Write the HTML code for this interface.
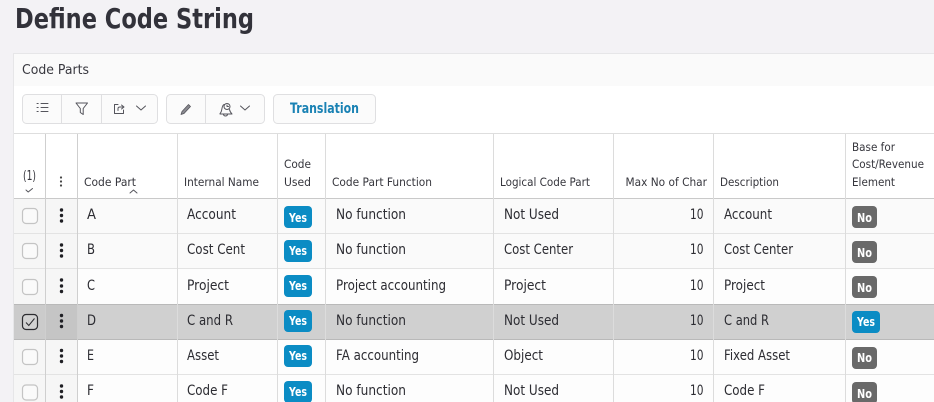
<!DOCTYPE html>
<html><head><meta charset="utf-8"><style>
html,body{margin:0;padding:0;background:#f3f2f5;width:934px;height:402px;overflow:hidden}
svg{display:block;position:absolute;left:0;top:0}
text{font-family:"DejaVu Sans","Liberation Sans",sans-serif}
.c{font-size:14px;fill:#2c2c32}
.h{font-size:11.5px;fill:#36363d}
.b{font-size:12px;font-weight:700;fill:#fff}
.i{fill:none;stroke:#55555c;stroke-width:1;stroke-linecap:round;stroke-linejoin:round}
.l{stroke:#e3e3e3;stroke-width:1}
.v{stroke:#dcdcdc;stroke-width:1}
</style></head><body>
<svg width="934" height="402" viewBox="0 0 934 402">
<rect width="934" height="402" fill="#f3f2f5"/>
<text x="15" y="28" font-size="28" font-weight="700" fill="#32323a" textLength="239" lengthAdjust="spacingAndGlyphs">Define Code String</text>

<rect x="13.5" y="53.5" width="921" height="349" fill="#fff" stroke="#e6e6e8"/>
<rect x="14" y="54" width="920" height="32" fill="#fafafa"/>
<text x="22" y="74" font-size="13.5" fill="#38383f" textLength="67" lengthAdjust="spacingAndGlyphs">Code Parts</text>

<!-- toolbar -->
<rect x="22.5" y="94.5" width="135" height="29" rx="4" fill="#fbfbfb" stroke="#dfdfe1"/>
<path d="M61.5 95V123M101.5 95V123" stroke="#dfdfe1"/>
<rect x="166.5" y="94.5" width="98" height="29" rx="4" fill="#fbfbfb" stroke="#dfdfe1"/>
<path d="M205.5 95V123" stroke="#dfdfe1"/>
<rect x="273.5" y="94.5" width="102" height="29" rx="4" fill="#fbfbfb" stroke="#dfdfe1"/>
<text x="290" y="113" font-size="14" font-weight="700" fill="#1a82b4" textLength="69" lengthAdjust="spacingAndGlyphs">Translation</text>
<!-- list icon -->
<path d="M41 103.5H48M41 107.5H48M41 111.5H48" class="i"/>
<path d="M37 103.5h1.200M37 107.5h1.200M37 111.500h1.200" class="i" stroke-width="1.600"/>
<!-- filter icon -->
<path d="M76 103H87.500L83.200 108.500V114.500L80.300 112.500V108.500Z" class="i"/>
<!-- export icon -->
<path d="M118 104.500H114.500V113.500H123.500V110" class="i"/>
<path d="M118 110.500V108.500Q118 107 120 107H123.500M121.500 105L124 107L121.500 109" class="i"/>
<path d="M136.500 106L141 110L145.500 106" class="i"/>
<!-- pencil -->
<path d="M182 111.500L181 114.500L184 113.500L190.500 106.500L188.500 104.500Z" fill="#8a8a90" stroke="#55555c" stroke-width=".8" stroke-linejoin="round"/>
<!-- bell -->
<path d="M220 113.500C222 112 221.500 109 222.500 106.500C223 105 224 104.500 224.500 104.500M229.500 109.500C229.800 111 230.700 112.800 232 114H220M223.500 114.500C224 116.500 227 116.500 227.500 114.500" class="i"/>
<circle cx="227" cy="106.500" r="3" class="i"/>
<path d="M227 105V106.500H228.500" class="i"/>
<path d="M240.500 106L245 110L249.500 106" class="i"/>

<!-- table bg -->
<rect x="14" y="134" width="920" height="64" fill="#fff"/>
<rect x="14" y="199" width="920" height="70" fill="#fafafa"/>
<rect x="14" y="269" width="920" height="35" fill="#fdfdfd"/>
<rect x="14" y="340" width="920" height="62" fill="#fdfdfd"/>
<rect x="14" y="199" width="64" height="203" fill="#f6f6f6"/>
<rect x="14" y="304" width="920" height="36" fill="#d0d0d0"/>
<rect x="14" y="304" width="32" height="36" fill="#cbcbcb"/>
<rect x="46" y="304" width="32" height="36" fill="#c5c5c5"/>

<!-- lines -->
<path d="M14 133.500H934" stroke="#dedede"/>
<path d="M14 198.500H934" stroke="#c9c9c9"/>
<path d="M14 233.500H934M14 268.500H934M14 374.500H934" class="l"/>
<path d="M14 304.500H934M14 339.500H934" stroke="#b9b9b9"/>
<path d="M45.500 134V402M77.500 134V402" stroke="#cfcfcf"/>
<path d="M177.500 134V402M277.500 134V402M325.500 134V402M493.500 134V402M613.500 134V402M713.500 134V402M845.500 134V402" class="v"/>

<!-- header -->
<text x="23" y="180" class="h" style="font-size:13px" textLength="13" lengthAdjust="spacingAndGlyphs">(1)</text>
<path d="M26 190L28.200 192L32.500 188.500" class="i"/>
<circle cx="61" cy="177.500" r="1.100" fill="#444"/><circle cx="61" cy="181.500" r="1.100" fill="#444"/><circle cx="61" cy="185.500" r="1.100" fill="#444"/>
<text x="84" y="186" class="h" textLength="52" lengthAdjust="spacingAndGlyphs">Code Part</text>
<path d="M130 193L133.500 190L137 193" class="i"/>
<text x="184" y="186" class="h" textLength="75" lengthAdjust="spacingAndGlyphs">Internal Name</text>
<text x="284" y="168" class="h" textLength="27" lengthAdjust="spacingAndGlyphs">Code</text>
<text x="284" y="186" class="h" textLength="27" lengthAdjust="spacingAndGlyphs">Used</text>
<text x="332" y="186" class="h" textLength="100" lengthAdjust="spacingAndGlyphs">Code Part Function</text>
<text x="500" y="186" class="h" textLength="90" lengthAdjust="spacingAndGlyphs">Logical Code Part</text>
<text x="625.500" y="186" class="h" textLength="81.500" lengthAdjust="spacingAndGlyphs">Max No of Char</text>
<text x="720" y="186" class="h" textLength="59" lengthAdjust="spacingAndGlyphs">Description</text>
<text x="852" y="151" class="h" textLength="43" lengthAdjust="spacingAndGlyphs">Base for</text>
<text x="852" y="168" class="h" textLength="72" lengthAdjust="spacingAndGlyphs">Cost/Revenue</text>
<text x="852" y="186" class="h" textLength="43" lengthAdjust="spacingAndGlyphs">Element</text>

<!-- checkboxes -->
<g fill="#fafafa" stroke="#c4c4c4" stroke-width="1.200">
<rect x="22.500" y="208.500" width="15" height="15" rx="3.500"/>
<rect x="22.500" y="243.500" width="15" height="15" rx="3.500"/>
<rect x="22.500" y="279.500" width="15" height="15" rx="3.500"/>
<rect x="22.500" y="349.500" width="15" height="15" rx="3.500"/>
<rect x="22.500" y="385" width="15" height="15" rx="3.500"/>
</g>
<rect x="22.500" y="314.500" width="15" height="15" rx="3.500" fill="#d2d2d2" stroke="#2c2c30" stroke-width="1.200"/>
<path d="M26 322.500L28.800 325.500L34.500 318.500" fill="none" stroke="#2c2c30" stroke-width="1"/>

<!-- row kebabs -->
<g fill="#1f1f24">
<circle cx="61.500" cy="210" r="1.700"/><circle cx="61.500" cy="215.500" r="1.700"/><circle cx="61.500" cy="221" r="1.700"/>
<circle cx="61.500" cy="245" r="1.700"/><circle cx="61.500" cy="250.500" r="1.700"/><circle cx="61.500" cy="256" r="1.700"/>
<circle cx="61.500" cy="280" r="1.700"/><circle cx="61.500" cy="286" r="1.700"/><circle cx="61.500" cy="291.500" r="1.700"/>
<circle cx="61.500" cy="315.500" r="1.700"/><circle cx="61.500" cy="321" r="1.700"/><circle cx="61.500" cy="326.500" r="1.700"/>
<circle cx="61.500" cy="350.500" r="1.700"/><circle cx="61.500" cy="356" r="1.700"/><circle cx="61.500" cy="361.500" r="1.700"/>
<circle cx="61.500" cy="386" r="1.700"/><circle cx="61.500" cy="391.500" r="1.700"/><circle cx="61.500" cy="397" r="1.700"/>
</g>

<!-- col: code part -->
<text x="87" y="219" class="c" textLength="9" lengthAdjust="spacingAndGlyphs">A</text>
<text x="87" y="254" class="c" textLength="8" lengthAdjust="spacingAndGlyphs">B</text>
<text x="87" y="290" class="c" textLength="8" lengthAdjust="spacingAndGlyphs">C</text>
<text x="87" y="325" class="c" textLength="9" lengthAdjust="spacingAndGlyphs">D</text>
<text x="87" y="360" class="c" textLength="7" lengthAdjust="spacingAndGlyphs">E</text>
<text x="87" y="395" class="c" textLength="7" lengthAdjust="spacingAndGlyphs">F</text>
<!-- col: internal name -->
<text x="187" y="219" class="c" textLength="49" lengthAdjust="spacingAndGlyphs">Account</text>
<text x="187" y="254" class="c" textLength="58" lengthAdjust="spacingAndGlyphs">Cost Cent</text>
<text x="187" y="290" class="c" textLength="42" lengthAdjust="spacingAndGlyphs">Project</text>
<text x="187" y="325" class="c" textLength="46" lengthAdjust="spacingAndGlyphs">C and R</text>
<text x="187" y="360" class="c" textLength="32" lengthAdjust="spacingAndGlyphs">Asset</text>
<text x="187" y="395" class="c" textLength="41" lengthAdjust="spacingAndGlyphs">Code F</text>

<!-- badges yes -->
<g fill="#0b8cc4">
<rect x="284" y="206" width="28" height="22" rx="4"/>
<rect x="284" y="240" width="28" height="22" rx="4"/>
<rect x="284" y="275" width="28" height="22" rx="4"/>
<rect x="284" y="310" width="28" height="22" rx="4"/>
<rect x="284" y="345" width="28" height="22" rx="4"/>
<rect x="284" y="381" width="28" height="22" rx="4"/>
<rect x="852" y="311" width="28" height="22" rx="4"/>
</g>
<text x="289" y="222" class="b" textLength="18" lengthAdjust="spacingAndGlyphs">Yes</text>
<text x="289" y="255" class="b" textLength="18" lengthAdjust="spacingAndGlyphs">Yes</text>
<text x="289" y="290" class="b" textLength="18" lengthAdjust="spacingAndGlyphs">Yes</text>
<text x="289" y="325" class="b" textLength="18" lengthAdjust="spacingAndGlyphs">Yes</text>
<text x="289" y="360" class="b" textLength="18" lengthAdjust="spacingAndGlyphs">Yes</text>
<text x="289" y="396" class="b" textLength="18" lengthAdjust="spacingAndGlyphs">Yes</text>
<text x="857" y="326" class="b" textLength="18" lengthAdjust="spacingAndGlyphs">Yes</text>
<!-- badges no -->
<g fill="#696969">
<rect x="852" y="206" width="25" height="22" rx="4"/>
<rect x="852" y="241" width="25" height="22" rx="4"/>
<rect x="852" y="276" width="25" height="22" rx="4"/>
<rect x="852" y="347" width="25" height="22" rx="4"/>
<rect x="852" y="382" width="25" height="22" rx="4"/>
</g>
<text x="857" y="222" class="b" textLength="15" lengthAdjust="spacingAndGlyphs">No</text>
<text x="857" y="257" class="b" textLength="15" lengthAdjust="spacingAndGlyphs">No</text>
<text x="857" y="292" class="b" textLength="15" lengthAdjust="spacingAndGlyphs">No</text>
<text x="857" y="362" class="b" textLength="15" lengthAdjust="spacingAndGlyphs">No</text>
<text x="857" y="398" class="b" textLength="15" lengthAdjust="spacingAndGlyphs">No</text>

<!-- col: function -->
<text x="336" y="219" class="c" textLength="70" lengthAdjust="spacingAndGlyphs">No function</text>
<text x="336" y="254" class="c" textLength="70" lengthAdjust="spacingAndGlyphs">No function</text>
<text x="336" y="290" class="c" textLength="110" lengthAdjust="spacingAndGlyphs">Project accounting</text>
<text x="336" y="325" class="c" textLength="70" lengthAdjust="spacingAndGlyphs">No function</text>
<text x="336" y="360" class="c" textLength="83" lengthAdjust="spacingAndGlyphs">FA accounting</text>
<text x="336" y="395" class="c" textLength="70" lengthAdjust="spacingAndGlyphs">No function</text>
<!-- col: logical -->
<text x="504" y="219" class="c" textLength="55" lengthAdjust="spacingAndGlyphs">Not Used</text>
<text x="504" y="254" class="c" textLength="69" lengthAdjust="spacingAndGlyphs">Cost Center</text>
<text x="504" y="290" class="c" textLength="42" lengthAdjust="spacingAndGlyphs">Project</text>
<text x="504" y="325" class="c" textLength="55" lengthAdjust="spacingAndGlyphs">Not Used</text>
<text x="504" y="360" class="c" textLength="39" lengthAdjust="spacingAndGlyphs">Object</text>
<text x="504" y="395" class="c" textLength="55" lengthAdjust="spacingAndGlyphs">Not Used</text>
<!-- col: max -->
<text x="690" y="219" class="c" textLength="13.500" lengthAdjust="spacingAndGlyphs">10</text>
<text x="690" y="254" class="c" textLength="13.500" lengthAdjust="spacingAndGlyphs">10</text>
<text x="690" y="290" class="c" textLength="13.500" lengthAdjust="spacingAndGlyphs">10</text>
<text x="690" y="325" class="c" textLength="13.500" lengthAdjust="spacingAndGlyphs">10</text>
<text x="690" y="360" class="c" textLength="13.500" lengthAdjust="spacingAndGlyphs">10</text>
<text x="690" y="395" class="c" textLength="13.500" lengthAdjust="spacingAndGlyphs">10</text>
<!-- col: description -->
<text x="724" y="219" class="c" textLength="48" lengthAdjust="spacingAndGlyphs">Account</text>
<text x="724" y="254" class="c" textLength="69" lengthAdjust="spacingAndGlyphs">Cost Center</text>
<text x="724" y="290" class="c" textLength="41" lengthAdjust="spacingAndGlyphs">Project</text>
<text x="724" y="325" class="c" textLength="45" lengthAdjust="spacingAndGlyphs">C and R</text>
<text x="724" y="360" class="c" textLength="66" lengthAdjust="spacingAndGlyphs">Fixed Asset</text>
<text x="724" y="395" class="c" textLength="41" lengthAdjust="spacingAndGlyphs">Code F</text>
</svg>
</body></html>
